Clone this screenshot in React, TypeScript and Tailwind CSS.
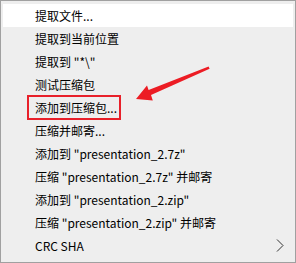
import React from "react";

const items = [
  "提取文件...",
  "提取到当前位置",
  "提取到 \"*\\\"",
  "测试压缩包",
  "添加到压缩包...",
  "压缩并邮寄...",
  "添加到 \"presentation_2.7z\"",
  "压缩 \"presentation_2.7z\" 并邮寄",
  "添加到 \"presentation_2.zip\"",
  "压缩 \"presentation_2.zip\" 并邮寄",
  "CRC SHA",
];

export default function App() {
  return (
    <div
      className="relative w-[296px] h-[263px] bg-[#eeeeee] border border-[#a0a0a0] text-[12px] text-[#000] overflow-hidden"
      style={{ fontFamily: '"Segoe UI", "Noto Sans CJK SC", "Noto Sans", sans-serif' }}
    >
      <div className="flex flex-col pt-[3px] px-[2px]">
        {items.map((label, i) => {
          // 第一项是鼠标悬停的高亮项
          const hover = i === 0;
          const boxed = i === 4;
          return (
            <div
              key={label}
              className={`h-[23px] flex items-center justify-between ${
                hover ? "bg-white" : ""
              } ${boxed ? "pl-[24px]" : "pl-[32px]"}`}
            >
              {boxed ? (
                <span className="h-[25px] flex items-center border-2 border-[#e8202a] pl-[6px] pr-[2px]">
                  {label}
                </span>
              ) : (
                <span className="whitespace-nowrap">{label}</span>
              )}
              {label === "CRC SHA" && (
                <svg width="8" height="13" viewBox="0 0 8 13" className="mr-[9px]">
                  <path d="M1 0.5 L7 6.5 L1 12.5" fill="none" stroke="#333" strokeWidth="1" />
                </svg>
              )}
            </div>
          );
        })}
      </div>
      <svg
        className="absolute left-0 top-0 pointer-events-none"
        width="296"
        height="263"
        viewBox="0 0 296 263"
      >
        <polygon
          points="135,98 146,84.5 147.6,89 207.6,65.6 208.6,67.8 150,94 151.8,99.5"
          fill="#ec1c24"
        />
      </svg>
    </div>
  );
}
